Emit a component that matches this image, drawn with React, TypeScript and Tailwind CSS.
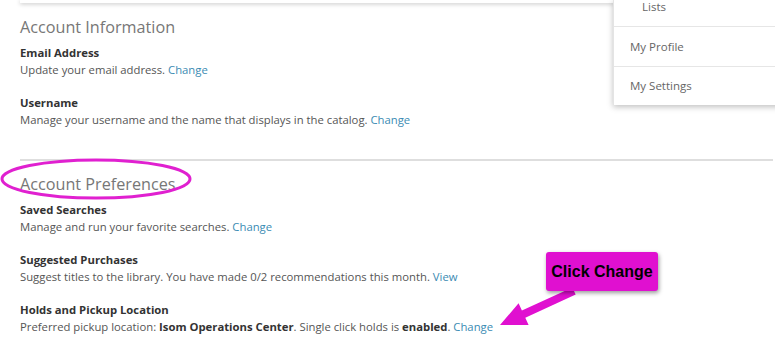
const link = 'text-[#3b8bb3]'

function Item({ label, children }: { label: string; children: React.ReactNode }) {
  return (
    <div className="mb-[16px]">
      <p className="text-[11.3px] leading-[17px] font-bold text-[#333]">{label}</p>
      <p className="text-[11.3px] leading-[17px] text-[#555]">{children}</p>
    </div>
  )
}

export default function App() {
  return (
    <div className="relative w-[775px] h-[340px] overflow-hidden bg-white font-['Open_Sans',sans-serif]">
      <div className="ml-[20px] h-[3px] bg-white shadow-[0_1px_4px_rgba(0,0,0,0.25)]" />

      <div className="pl-[20px] pt-[12px]">
        <h2 className="text-[16.2px] leading-[24px] text-[#777]">Account Information</h2>
        <div className="mt-[5px]">
          <Item label="Email Address">
            Update your email address. <span className={link}>Change</span>
          </Item>
          <Item label="Username">
            Manage your username and the name that displays in the catalog.{' '}
            <span className={link}>Change</span>
          </Item>
        </div>

        <div className="mt-[31px] h-[2px] bg-[#dedede] mr-[2px]" />

        <h2 className="mt-[11px] text-[16.2px] leading-[24px] text-[#777]">Account Preferences</h2>
        <div className="mt-[5px]">
          <Item label="Saved Searches">
            Manage and run your favorite searches. <span className={link}>Change</span>
          </Item>
          <Item label="Suggested Purchases">
            Suggest titles to the library. You have made 0/2 recommendations this month.{' '}
            <span className={link}>View</span>
          </Item>
          <Item label="Holds and Pickup Location">
            Preferred pickup location: <b className="text-[#333]">Isom Operations Center</b>. Single click
            holds is <b className="text-[#333]">enabled</b>. <span className={link}>Change</span>
          </Item>
        </div>
      </div>

      {/* account dropdown menu */}
      <div className="absolute left-[613px] top-0 w-[170px] bg-white border-l border-[#e4e4e4] shadow-[0_2px_6px_rgba(0,0,0,0.25)] text-[11.5px] text-[#666]">
        <div className="h-[27px] pl-[28px] border-b border-[#e6e6e6]">
          <span className="block leading-[14px]">Lists</span>
        </div>
        <div className="h-[40px] pl-[16px] flex items-center border-b border-[#e6e6e6]">My Profile</div>
        <div className="h-[38px] pl-[16px] flex items-center">My Settings</div>
      </div>

      {/* annotation: circle around heading */}
      <svg className="absolute left-0 top-0 pointer-events-none" width="775" height="340">
        <ellipse cx="96" cy="179" rx="94" ry="19" fill="none" stroke="#e020d0" strokeWidth="3" />
        <polygon
          points="572.3,287.4 521.9,310.6 518.6,303.3 500,325 528.6,325.1 525.3,317.8 575.7,294.6"
          fill="#e010d0"
        />
      </svg>

      {/* annotation: callout */}
      <div className="absolute left-[546px] top-[252px] w-[112px] h-[39px] rounded-[3px] bg-[#e010d0] shadow-[1px_2px_4px_rgba(0,0,0,0.4)] flex items-center justify-center font-['Liberation_Sans',sans-serif] font-bold text-[16px] text-black">
        Click Change
      </div>
    </div>
  )
}
